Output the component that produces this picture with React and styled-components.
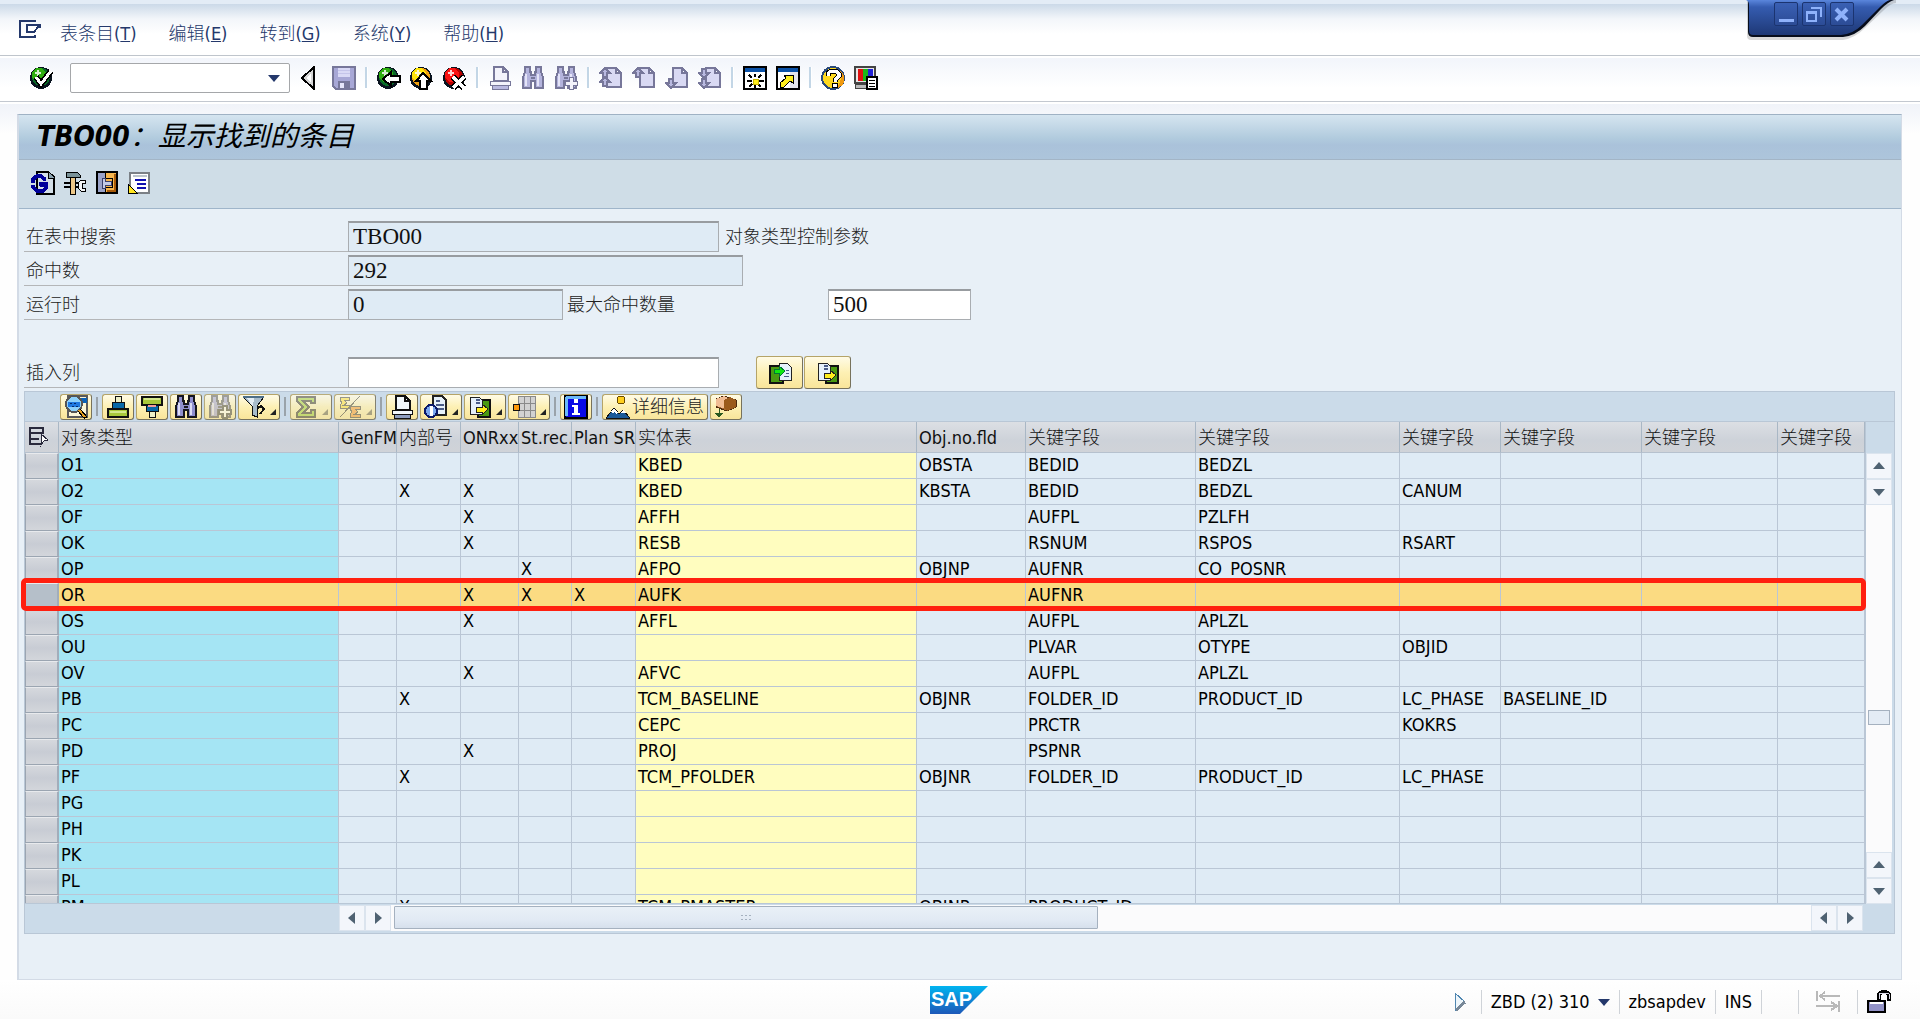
import React from "react";
import styled, { createGlobalStyle, css } from "styled-components";

const GlobalStyle = createGlobalStyle`
  * {
    box-sizing: border-box;
  }

  body {
    margin: 0;
    background: #fff;
    color: #000;
    font-family: "DejaVu Sans Condensed", "DejaVu Sans", "Noto Sans CJK SC", sans-serif;
    font-size: 18px;
    line-height: 25px;
  }

  button,
  input {
    font: inherit;
    color: inherit;
    margin: 0;
    padding: 0;
  }
`;

const Page = styled.div`
  position: relative;
  display: flex;
  flex-direction: column;
  height: 100vh;
  min-height: 700px;
  overflow: hidden;
  background: linear-gradient(#f0f3f9, #fefefe 30px) 0 104px no-repeat #fff;
`;

/* ---------- icons ---------- */

const Svg = styled.svg`
  display: block;
  flex: none;
  opacity: ${(p) => (p.$dim ? 0.5 : 1)};
`;

const Ball = ({ fill, dark }) => (
  <>
    <circle cx="11" cy="12" r="11" fill="#0a1420" />
    <circle cx="11" cy="11" r="9" fill={dark} />
    <circle cx="9" cy="9" r="7" fill={fill} />
    <path d="M7 4h2v2h2v2H9v2H7V8H5V6h2z" fill="#fff" opacity="0.8" />
  </>
);

const PageShape = ({ x = 8, fill = "#d9d9f3", stroke = "#77779a" }) => (
  <path d={`M${x} 2h9l5 5v14H${x}z M${x + 9} 2v5h5`} fill={fill} stroke={stroke} strokeWidth="2" />
);

const UpArrow = ({ x, y }) => (
  <path d={`M${x} ${y}l5 5h-3v4h-4v-4h-3z`} fill="#b9b9e0" stroke="#77779a" strokeWidth="1.5" />
);

const DownArrow = ({ x, y }) => (
  <path d={`M${x} ${y}l5-5h-3v-4h-4v4h-3z`} fill="#b9b9e0" stroke="#77779a" strokeWidth="1.5" />
);

const Binoculars = ({ fill, stroke, light }) => (
  <>
    <path
      d="M4 1h5v5h1v3h4V6h1V1h5v5l2 5v11h-8v-7h-4v7H2V11l2-5z"
      fill={fill}
      stroke={stroke}
      strokeWidth="2"
    />
    <path d="M5 8v12M17 8v12" stroke={light} strokeWidth="2" />
    <path d="M10 12h4" stroke={stroke} strokeWidth="2" />
  </>
);

const Printer = ({ paper, body, stroke }) => (
  <>
    <path d="M6 15V1h9l5 5v9z" fill={paper} stroke={stroke} strokeWidth="2" />
    <path d="M15 1v5h5" fill="none" stroke={stroke} strokeWidth="2" />
    <path d="M2 15h20v4H2z" fill={paper} stroke={stroke} strokeWidth="1" />
    <path d="M4 19h16v4H4z" fill={body} stroke={stroke} strokeWidth="1" />
  </>
);

const icons = {
  menu: (
    <>
      <path d="M17 5V4H2v16h15v-2" fill="none" stroke="#24386b" strokeWidth="2" />
      <path d="M9 8h13v2h-2l-4 5H9z" fill="#fff" stroke="#24386b" strokeWidth="2" />
    </>
  ),
  enter: (
    <>
      <Ball fill="#2fae10" dark="#0a6a28" />
      <path d="M6 11l5 7L21 5" fill="none" stroke="#000" strokeWidth="6" />
      <path d="M6 11l5 7L21 5" fill="none" stroke="#fff" strokeWidth="3" />
    </>
  ),
  collapse: (
    <>
      <path d="M15 1v22L3 12z" fill="#d6d6d6" stroke="#000" strokeWidth="2" />
      <path d="M12 7v9l-5-4z" fill="#fff" />
    </>
  ),
  save: (
    <>
      <path d="M1 1h22v22H4l-3-3z" fill="#a7a7d6" stroke="#77779a" strokeWidth="2" />
      <path d="M6 2h12v9H6z" fill="#d9d9f6" />
      <path d="M6 4h12M6 7h12" stroke="#c4c4ea" />
      <path d="M6 15h12v8H6z" fill="#77779a" />
      <path d="M8 17h4v5H8z" fill="#e6e6fa" />
    </>
  ),
  back: (
    <>
      <Ball fill="#2fae10" dark="#0a6a28" />
      <path d="M6 13l8-7v4h9v6h-9v4z" fill="#fff" stroke="#000" strokeWidth="2" />
    </>
  ),
  exit: (
    <>
      <Ball fill="#ffe60a" dark="#f0a010" />
      <path d="M13 7l8 8h-4v8h-7v-8H6z" fill="#fff" stroke="#000" strokeWidth="2" />
    </>
  ),
  cancel: (
    <>
      <Ball fill="#fa1414" dark="#b80000" />
      <path d="M10 11l11 11M21 11L10 22" stroke="#000" strokeWidth="6" />
      <path d="M10 11l11 11M21 11L10 22" stroke="#fff" strokeWidth="3" />
    </>
  ),
  print: <Printer paper="#f3f3fb" body="#b9b9e0" stroke="#77779a" />,
  find: <Binoculars fill="#b4b4dd" stroke="#77779a" light="#e4e4f8" />,
  findNext: (
    <>
      <Binoculars fill="#b4b4dd" stroke="#77779a" light="#e4e4f8" />
      <path d="M15 11h4v4h4v4h-4v4h-4v-4h-4v-4h4z" fill="#f3f3fb" stroke="#77779a" strokeWidth="1" />
    </>
  ),
  firstPage: (
    <>
      <PageShape />
      <UpArrow x={6} y={2} />
      <UpArrow x={6} y={11} />
    </>
  ),
  prevPage: (
    <>
      <PageShape />
      <UpArrow x={6} y={2} />
    </>
  ),
  nextPage: (
    <>
      <PageShape />
      <DownArrow x={6} y={22} />
    </>
  ),
  lastPage: (
    <>
      <PageShape />
      <DownArrow x={6} y={12} />
      <DownArrow x={6} y={22} />
    </>
  ),
  newSession: (
    <>
      <path d="M1 1h22v22H1z" fill="#fff" stroke="#000" strokeWidth="2" />
      <path d="M2 2h20v4H2z" fill="#0b52a8" />
      <path d="M12 8v3M12 18v4M4 15h5M15 15h6M6 9l3 3M18 9l-3 3M6 21l3-3M18 21l-3-3" stroke="#000" strokeWidth="2" />
      <path d="M10 13h5v5h-5z" fill="#ffee1e" stroke="#c8b400" />
    </>
  ),
  shortcut: (
    <>
      <path d="M1 1h22v22H1z" fill="#e4e4ec" stroke="#000" strokeWidth="2" />
      <path d="M2 2h20v4H2z" fill="#0b52a8" />
      <path d="M2 6h12v16H2z" fill="#fff" />
      <path d="M4 21v-4l6-5-2-3h9v8l-3-2-6 6z" fill="#ffee1e" stroke="#000" strokeWidth="1" />
    </>
  ),
  help: (
    <>
      <circle cx="12" cy="12" r="11" fill="#ffd91e" stroke="#2a4a7a" strokeWidth="2" />
      <path d="M17 4a9 9 0 0 1-6 18c8 0 12-10 6-18z" fill="#f09a10" />
      <path d="M7 10V7l3-2h5l3 3v2l-4 4v2" fill="none" stroke="#000" strokeWidth="5" />
      <path d="M7 10V7l3-2h5l3 3v2l-4 4v2" fill="none" stroke="#fff" strokeWidth="3" />
      <path d="M11 17h5v4h-5z" fill="#fff" stroke="#000" />
    </>
  ),
  layout: (
    <>
      <path d="M1 1h20v16H1z" fill="#e6e6e6" stroke="#444" strokeWidth="2" />
      <path d="M4 3h5v12H4z" fill="#e01010" />
      <path d="M9 3h5v12H9z" fill="#18b818" />
      <path d="M14 3h5v12h-5z" fill="#2020d8" />
      <path d="M1 18h14v4H1z" fill="#bbb" stroke="#444" />
      <path d="M13 11h10v12H13z" fill="#fff" stroke="#000" strokeWidth="2" />
      <path d="M15 14h6M15 17h6M15 20h6" stroke="#000" />
    </>
  ),
  refresh: (
    <>
      <path d="M6 1h11l6 5v17H6z" fill="#d4dfe8" stroke="#000" strokeWidth="2" />
      <path d="M17 1v6h6" fill="#8ba2b0" stroke="#000" />
      <path d="M15 8H13L10 5H6L2 8v4" fill="none" stroke="#00009a" strokeWidth="4" />
      <path d="M2 14v2l4 4h6l3-3v-3H9" fill="none" stroke="#00009a" strokeWidth="4" />
      <path d="M8 11h9v4H8z" fill="#00009a" />
    </>
  ),
  tools: (
    <>
      <path d="M1 12h6M1 16h6M12 12h4M12 16h4" stroke="#000" strokeWidth="2" />
      <path d="M3 1h11l3 3v2H3z" fill="#7a9298" stroke="#000" strokeWidth="1" />
      <path d="M7 6h5v17H7z" fill="#ecc788" stroke="#000" strokeWidth="1" />
      <path d="M22 9h-4l-3 3v5l3 3h4v-3h-3v-5h3z" fill="#f2f4f6" stroke="#000" strokeWidth="1" />
    </>
  ),
  select: (
    <>
      <path d="M2 1h20v21H2z" fill="#f7b64e" stroke="#000" strokeWidth="2" />
      <path d="M3 2h7v19H3z" fill="#9aa2c8" />
      <path d="M10 2v5h7v9h-7v5" fill="none" stroke="#000" strokeWidth="1" />
      <path d="M7 7h3v3h6v4h-6v3H7z" fill="#c4cbe6" stroke="#39406a" strokeWidth="1" />
      <path d="M20 3v17h-8" fill="none" stroke="#a85a08" strokeWidth="2" />
    </>
  ),
  memo: (
    <>
      <path d="M3 2h19v20H3z" fill="#fff" stroke="#7b8086" strokeWidth="2" />
      <path d="M8 9h11M10 13h9M10 17h9" stroke="#1010b0" strokeWidth="2" />
      <path d="M6 5h14" stroke="#bcc4cc" strokeWidth="2" />
      <path d="M1 13l9 9H1z" fill="#ffe420" stroke="#000" />
    </>
  ),
  details: (
    <>
      <path d="M4 1h19v21H4z" fill="#fbf6d8" stroke="#5a5a5a" strokeWidth="2" />
      <path d="M17 3h6v5h-6z" fill="#0b62b8" />
      <circle cx="10" cy="9" r="8" fill="#8cd0fa" stroke="#555" strokeWidth="2" />
      <path d="M4 7h12v5H4z" fill="#1e78e0" />
      <path d="M6 8h2M10 8h2M8 11h2M12 11h2" stroke="#042a6a" />
      <path d="M15 15l7 8" stroke="#000" strokeWidth="4" />
      <path d="M15 15l6 7" stroke="#e8a020" strokeWidth="2" />
    </>
  ),
  sortAsc: (
    <>
      <path d="M9 1h6v6H9z" fill="#eef0c8" stroke="#111" strokeWidth="1" />
      <path d="M6 7h12v6H6z" fill="#0868a8" stroke="#111" strokeWidth="1" />
      <path d="M2 14h20v8H2z" fill="#a9c83c" stroke="#111" strokeWidth="2" />
      <path d="M4 16h16v2H4z" fill="#d3e78c" />
    </>
  ),
  sortDesc: (
    <>
      <path d="M2 2h20v8H2z" fill="#a9c83c" stroke="#111" strokeWidth="2" />
      <path d="M4 3h16v2H4z" fill="#d3e78c" />
      <path d="M6 10h12v6H6z" fill="#0868a8" stroke="#111" strokeWidth="1" />
      <path d="M8 10h8v2H8z" fill="#f59a9a" />
      <path d="M9 16h6v6H9z" fill="#eef0c8" stroke="#111" strokeWidth="1" />
    </>
  ),
  gridFind: <Binoculars fill="#8f8fce" stroke="#16161e" light="#dcdcf4" />,
  gridFindNext: (
    <>
      <Binoculars fill="#8f8fce" stroke="#33333c" light="#dcdcf4" />
      <path d="M15 11h4v4h4v4h-4v4h-4v-4h-4v-4h4z" fill="#fff" stroke="#222" strokeWidth="2" />
    </>
  ),
  filter: (
    <>
      <path d="M1 2h21l-7 9v11l-5-2v-9z" fill="#a8bccb" stroke="#111" strokeWidth="1" />
      <path d="M5 3h7l-1 8h-1z" fill="#e4edf3" />
      <path d="M1 2h21" stroke="#4e6f88" strokeWidth="2" />
      <path d="M16 13l3-2 3 3-4 5" fill="none" stroke="#111" strokeWidth="2" />
    </>
  ),
  sum: (
    <path
      d="M3 2h18v6h-4V6H9l6 6-6 6h8v-3h4v7H3v-4l6-6-6-6z"
      fill="#8fc81e"
      stroke="#111"
      strokeWidth="2"
    />
  ),
  subtotal: (
    <>
      <path d="M2 2h9v3H6l3 3-3 2h5v3H2v-3l2-2-2-3z" fill="#ffe020" stroke="#222" />
      <path d="M12 11h10v3h-5l3 3-3 2h5v3H12v-3l2-2-2-3z" fill="#f58a1e" stroke="#222" />
      <path d="M22 1L2 22" stroke="#222" strokeWidth="1" />
    </>
  ),
  gridPrint: <Printer paper="#f2f8fb" body="#8f9fc0" stroke="#111" />,
  views: (
    <>
      <path d="M9 1h9l4 4v15H9z" fill="#e6f1fb" stroke="#222" strokeWidth="2" />
      <path d="M12 6h4M12 10h8M14 14h6" stroke="#4a5c88" strokeWidth="2" />
      <circle cx="7" cy="16" r="6" fill="#7aa8f0" stroke="#0a1a6a" strokeWidth="2" />
      <path d="M7 11v10" stroke="#fff" strokeWidth="3" />
    </>
  ),
  exportFile: (
    <>
      <path d="M10 5h12v17H10z" fill="#4a9a12" stroke="#111" strokeWidth="2" />
      <path d="M2 2h9l3 3v14H2z" fill="#e6f1fb" stroke="#222" strokeWidth="1" />
      <path d="M8 5h4M8 8h4" stroke="#4a5c88" strokeWidth="2" />
      <path d="M8 12h6V9l6 5-6 6v-3H8z" fill="#ffee1e" stroke="#222" />
    </>
  ),
  importFile: (
    <>
      <path d="M2 5h13v17H2z" fill="#4a9a12" stroke="#111" strokeWidth="2" />
      <path d="M11 2h8l4 4v13H11z" fill="#e6f1fb" stroke="#222" strokeWidth="1" />
      <path d="M18 9h3M18 12h3M16 15h5" stroke="#4a5c88" />
      <path d="M6 8h5V5l6 5-6 6v-4H6z" fill="#10e810" stroke="#073" />
    </>
  ),
  gridLayout: (
    <>
      <path d="M6 1h17v21H6z" fill="#d2d2d2" />
      <path d="M6 1h17v21H6zM12 1v21M18 1v21M6 8h17M6 15h17" fill="none" stroke="#8a8a8a" strokeWidth="1" />
      <path d="M1 9h6v6H1z" fill="#ff9a0a" stroke="#111" strokeWidth="1" />
    </>
  ),
  info: (
    <>
      <path d="M1 1h22v22H1z" fill="#0a0ae6" stroke="#000" strokeWidth="2" />
      <path d="M2 2h20M2 2v19" stroke="#6ab8fa" strokeWidth="3" />
      <path d="M10 4h4v4h-4zM8 10h6v8h2v2H8v-2h2v-6H8z" fill="#fff" />
    </>
  ),
  mountain: (
    <>
      <circle cx="15" cy="5" r="4" fill="#ffcf1e" stroke="#6a4a00" strokeWidth="1" />
      <path d="M0 23l8-10 5 6 4-4 7 8z" fill="#1a5a9a" stroke="#111" />
      <path d="M5 17l3-4 4 5-2 1-2-2-1 2z" fill="#fff" />
      <path d="M15 18l2-3 3 3z" fill="#fff" />
    </>
  ),
  box: (
    <>
      <path d="M2 4l8-3 12 4v7l-9 4-11-4z" fill="#a5652a" stroke="#4a2a10" />
      <path d="M2 4l8-3 4 2v6l-5 4-7-2z" fill="#f1bd94" />
      <path d="M10 5l6-3 6 3v7l-9 4-3-4z" fill="#9a5a1c" />
      <path d="M5 14v6M1 18l4 4 4-4z" fill="#2a5a20" stroke="#2a5a20" strokeWidth="1" />
    </>
  ),
  columns: (
    <>
      <path d="M3 3h13v5H3zM3 8v11h11M3 14h9" fill="none" stroke="#2a2a3c" strokeWidth="2" />
      <path d="M14 9l7 6-4 1-3 4z" fill="#fff" stroke="#2a2a3c" strokeWidth="1" />
    </>
  ),
  play: (
    <>
      <path d="M7 3v18l10-9z" fill="#eef6fb" stroke="#4f86b0" strokeWidth="1" />
      <path d="M8 20l9-8" stroke="#788898" strokeWidth="3" />
    </>
  ),
  transfer: (
    <path
      d="M1 1v10M3 6h21M9 2L4 6l5 4M0 16h21M15 12l6 4-6 4M23 11v11"
      fill="none"
      stroke="#b9b9b9"
      strokeWidth="2"
    />
  ),
  lock: (
    <>
      <path d="M1 11h17v11H1z" fill="#9292c6" stroke="#000" strokeWidth="2" />
      <path d="M3 13h13" stroke="#fff" strokeWidth="2" />
      <path d="M12 10V4l3-2h4l3 2v7" fill="none" stroke="#000" strokeWidth="4" />
      <path d="M12 9V4l3-1h4l3 1v5" fill="none" stroke="#d8d8e6" strokeWidth="1" />
    </>
  ),
};

const Icon = ({ name, size = 24, dim }) => (
  <Svg width={size} height={size} viewBox="0 0 24 24" shapeRendering="crispEdges" $dim={dim} aria-hidden="true">
    {icons[name]}
  </Svg>
);

const shapes = {
  up: "M0 9l6-7 6 7z",
  down: "M0 3l6 7 6-7z",
  left: "M9 0L2 6l7 6z",
  right: "M3 0l7 6-7 6z",
};

const Arrow = ({ dir, color = "#4f6272" }) => (
  <Svg width="12" height="12" viewBox="0 0 12 12" aria-hidden="true">
    <path d={shapes[dir]} fill={color} />
  </Svg>
);

/* ---------- menu and system toolbar ---------- */

const MenuBar = styled.nav`
  display: flex;
  align-items: center;
  flex: none;
  height: 56px;
  padding: 8px 18px 0;
  border-top: 4px solid #e3ecf6;
  border-bottom: 1px solid #bfc5cc;
  background: linear-gradient(#cbd9e8, #f3f6fa 15px, #fff 30px);
`;

const MenuButton = styled.button`
  margin-right: 32px;
  border: 0;
  background: none;
  color: #24386b;
  font-weight: 300;
  white-space: nowrap;

  &:first-child {
    margin-right: 18px;
    margin-bottom: 10px;
  }
`;

const SystemBar = styled.div`
  display: flex;
  align-items: center;
  flex: none;
  gap: 9px;
  height: 44px;
  margin-top: 2px;
  padding: 0 30px 4px;
  border-bottom: 1px solid #c3c8d0;
  background: linear-gradient(#f2f5fb, #fff 30px);
`;

const IconButton = styled.button`
  display: flex;
  border: 0;
  background: none;
`;

const BarLine = styled.span`
  width: 3px;
  height: 21px;
  border-right: 1px solid #fff;
  background: #c3d6e6;
`;

const CommandBox = styled.div`
  display: flex;
  align-items: center;
  width: 220px;
  height: 30px;
  margin-left: 7px;
  padding-right: 9px;
  border: 1px solid #a5a7aa;
  border-radius: 2px;
  background: #fff;

  input {
    flex: 1;
    min-width: 0;
    border: 0;
    outline: 0;
    background: none;
  }
`;

const WindowTab = styled.div`
  position: absolute;
  top: 0;
  right: 24px;
  width: 150px;
  height: 44px;

  > svg {
    position: absolute;
    inset: 0;
  }
`;

const WindowButtons = styled.div`
  position: relative;
  display: flex;
  gap: 4px;
  padding: 2px 0 0 28px;

  button {
    width: 24px;
    height: 24px;
    border: 1px solid #1b3470;
    border-radius: 2px;
    background: linear-gradient(#3a60b4, #2c4c96);
  }
`;

/* ---------- work area ---------- */

const Panel = styled.main`
  display: flex;
  flex-direction: column;
  flex: 1;
  min-height: 0;
  margin: 12px 18px 0 17px;
  border: 1px solid #d3dbe6;
  border-left-width: 2px;
  border-top-color: #9fb2c4;
  background: #e8f0f7;
`;

const Title = styled.h1`
  flex: none;
  height: 45px;
  margin: 0;
  padding-left: 18px;
  border-bottom: 1px solid #a3b5c6;
  background: linear-gradient(#d5e5f0, #b0cadd 24px, #aac2da 30px, #adc5db);
  font-size: 28px;
  font-style: italic;
  font-weight: bold;
  line-height: 44px;

  span {
    font-weight: 400;
  }
`;

const AppBar = styled.div`
  display: flex;
  align-items: center;
  flex: none;
  gap: 8px;
  height: 49px;
  padding: 0 0 2px 12px;
  border-bottom: 1px solid #9fb5ca;
  background: #cfdde7;
`;

const Body = styled.div`
  display: flex;
  flex-direction: column;
  flex: 1;
  min-height: 0;
  padding: 12px 6px 45px 5px;
`;

const FieldRow = styled.div`
  display: flex;
  align-items: center;
  flex: none;
  height: 31px;
  margin-bottom: 3px;
  margin-top: ${(p) => (p.$spaced ? "34px" : "0")};
  color: #222;
  font-weight: 300;
  white-space: nowrap;
`;

const FieldLabel = styled.label`
  width: 324px;
  height: 31px;
  padding-left: 2px;
  border-bottom: 1px solid #b4b6b8;
  line-height: 32px;
`;

const SideLabel = styled.label`
  width: 265px;
  padding-left: 4px;
`;

const Note = styled.span`
  padding-left: 6px;
`;

const Field = styled.input`
  width: ${(p) => p.$width}px;
  height: 31px;
  padding-left: 4px;
  border: 1px solid #a9adb1;
  border-top: 2px solid #989ca0;
  background: ${(p) => (p.readOnly ? "#dfebf5" : "#fff")};
  color: #111;
  font-family: "Liberation Serif", serif;
  font-size: 23px;
`;

const goldButton = css`
  display: flex;
  align-items: center;
  justify-content: center;
  border: 1px solid #77725c;
  border-top-color: #b5a468;
  border-left-color: #b5a468;
  border-radius: 3px;
  background: linear-gradient(#fffbe6, #fdf0b4 50%, #f9e59a);
`;

const ColumnButton = styled.button`
  ${goldButton}
  width: 47px;
  height: 33px;
  margin-right: 1px;

  &:first-of-type {
    margin-left: 37px;
  }
`;

/* ---------- result grid ---------- */

const Grid = styled.section`
  display: flex;
  flex-direction: column;
  flex: 1;
  min-height: 0;
  border: 1px solid #b9c7d6;
  background: #cbdbe9;
`;

const GridBar = styled.div`
  display: flex;
  align-items: center;
  flex: none;
  gap: 2px;
  height: 30px;
  padding-left: 35px;
  border-bottom: 1px solid #b9c7d6;
`;

const GridButton = styled.button`
  ${goldButton}
  position: relative;
  height: 26px;
  padding: 0 3px;
  padding-right: ${(p) => (p.$menu ? "13px" : "3px")};
  opacity: ${(p) => (p.disabled ? 0.85 : 1)};
  gap: 2px;
  color: #222;
  font-weight: 300;
  white-space: nowrap;
  line-height: 24px;

  &::after {
    content: "";
    display: ${(p) => (p.$menu ? "block" : "none")};
    position: absolute;
    right: 3px;
    bottom: 4px;
    border: 3px solid #222;
    border-top-color: transparent;
    border-left-color: transparent;
    opacity: ${(p) => (p.disabled ? 0.4 : 1)};
  }
`;

const GridLine = styled.span`
  width: 2px;
  height: 19px;
  margin: 0 2px;
  background: #9aa3aa;
`;

const GridMain = styled.div`
  display: flex;
  flex: 1;
  min-height: 0;
`;

const TableArea = styled.div`
  position: relative;
  display: flex;
  flex: 1;
  min-width: 0;
`;

const Viewport = styled.div`
  flex: 1;
  min-width: 0;
  overflow: hidden;
  border-right: 1px solid #b9c7d6;
  border-bottom: 1px solid #b9c7d6;
`;

const Table = styled.table`
  width: 100%;
  table-layout: fixed;
  border-collapse: separate;
  border-spacing: 0;
`;

const HeadCell = styled.th`
  height: 31px;
  padding: 0 0 0 2px;
  border-right: 1px solid #a9b7c5;
  border-bottom: 1px solid #b6c1ce;
  background: linear-gradient(#dcdfe4, #cdd2d9 60%, #d0d3d8);
  color: #111;
  font-weight: 300;
  text-align: left;
  white-space: nowrap;
`;

const cellColors = { key: "#a5e5f4", entity: "#fffdbf" };

const Cell = styled.td`
  padding: 0 0 1px 2px;
  overflow: hidden;
  border-right: 1px solid #bac6d5;
  border-bottom: 1px solid #bac6d5;
  background: ${(p) => (p.$selected ? "#fbdb82" : cellColors[p.$kind] || "#dfebf5")};
  line-height: 24px;
  white-space: nowrap;
`;

const RowHandle = styled.td`
  padding: 0;
  border: 1px solid #9ba5b1;
  border-top: 1px solid #e8eaed;
  border-right: 2px solid #a2adba;
  background: ${(p) => (p.$selected ? "#b5bfc9" : "linear-gradient(#d5d8dd, #c8ccd4 50%, #d3d6db)")};
`;

const Highlight = styled.div`
  position: absolute;
  left: -4px;
  right: 0;
  height: 33px;
  border: 5px solid #ff1f0f;
  border-radius: 5px;
  pointer-events: none;
`;

const VScroll = styled.div`
  display: flex;
  flex-direction: column;
  width: 28px;
  padding: 31px 2px 0 0;
`;

const HScroll = styled.div`
  display: flex;
  flex: none;
  height: 29px;
  padding: 1px 31px 2px 314px;
`;

const ScrollButton = styled.button`
  display: flex;
  align-items: center;
  justify-content: center;
  flex: none;
  width: 26px;
  height: 26px;
  border: 1px solid #dbe4ee;
  background: #f3f6fb;
`;

const Track = styled.div`
  flex: 1;
  min-width: 0;
  min-height: 0;
  background: #fbfbfc;
`;

const VThumb = styled.div`
  height: 15px;
  margin: 0 2px;
  border: 1px solid #a5b1bf;
  background: #e4ecf5;
`;

const HThumb = styled.div`
  display: flex;
  align-items: center;
  justify-content: center;
  gap: 2px;
  width: calc(50% - 6px);
  height: 23px;
  margin: 1px 0 0 3px;
  border: 1px solid #a5b1bf;
  border-radius: 1px;
  background: linear-gradient(#e9f0f7, #e2eaf4 60%, #d6e0ec);

  i {
    width: 2px;
    height: 5px;
    border-top: 1px solid #a5b1bf;
    border-bottom: 1px solid #a5b1bf;
  }
`;

/* ---------- status bar ---------- */

const StatusBar = styled.footer`
  display: flex;
  align-items: center;
  flex: none;
  height: 39px;
  padding-right: 29px;
  padding-left: calc(50% - 30px);
  background: linear-gradient(#fff, #fafafa);
`;

const StatusItems = styled.div`
  display: flex;
  align-items: center;
  gap: 9px;
  margin-left: auto;
  padding-top: 4px;
  white-space: nowrap;

  span {
    display: flex;
    align-items: center;
    gap: 8px;
  }
`;

const StatusLine = styled.i`
  width: 1px;
  height: 24px;
  background: #cfd3d8;
`;

const StatusGap = styled.i`
  width: 18px;
`;

const Transfer = styled.div`
  padding: 0 8px;
`;

const menus = [
  ["表条目", "T"],
  ["编辑", "E"],
  ["转到", "G"],
  ["系统", "Y"],
  ["帮助", "H"],
];

const systemIcons = [
  "save", "|", "back", "exit", "cancel", "|", "print", "find", "findNext", "|",
  "firstPage", "prevPage", "nextPage", "lastPage", "|", "newSession", "shortcut", "|", "help", "layout",
];

const gridTools = [
  { icon: "details" }, "|",
  { icon: "sortAsc" }, { icon: "sortDesc" }, { icon: "gridFind" },
  { icon: "gridFindNext", disabled: true }, { icon: "filter", menu: true }, "|",
  { icon: "sum", menu: true, disabled: true }, { icon: "subtotal", menu: true, disabled: true }, "|",
  { icon: "gridPrint" }, { icon: "views", menu: true }, { icon: "exportFile", menu: true },
  { icon: "gridLayout", menu: true }, "|",
  { icon: "info" }, "|",
  { icon: "mountain", text: "详细信息" }, { icon: "box" },
];

const columns = [
  ["对象类型", 280], ["GenFM", 58], ["内部号", 64], ["ONRxx", 58], ["St.rec.", 53],
  ["Plan SR", 64], ["实体表", 281], ["Obj.no.fld", 109], ["关键字段", 170], ["关键字段", 204],
  ["关键字段", 101], ["关键字段", 141], ["关键字段", 136], ["关键字段"],
];

const rows = [
  ["O1", "", "", "", "", "", "KBED", "OBSTA", "BEDID", "BEDZL"],
  ["O2", "", "X", "X", "", "", "KBED", "KBSTA", "BEDID", "BEDZL", "CANUM"],
  ["OF", "", "", "X", "", "", "AFFH", "", "AUFPL", "PZLFH"],
  ["OK", "", "", "X", "", "", "RESB", "", "RSNUM", "RSPOS", "RSART"],
  ["OP", "", "", "", "X", "", "AFPO", "OBJNP", "AUFNR", "CO_POSNR"],
  ["OR", "", "", "X", "X", "X", "AUFK", "", "AUFNR"],
  ["OS", "", "", "X", "", "", "AFFL", "", "AUFPL", "APLZL"],
  ["OU", "", "", "", "", "", "", "", "PLVAR", "OTYPE", "OBJID"],
  ["OV", "", "", "X", "", "", "AFVC", "", "AUFPL", "APLZL"],
  ["PB", "", "X", "", "", "", "TCM_BASELINE", "OBJNR", "FOLDER_ID", "PRODUCT_ID", "LC_PHASE", "BASELINE_ID"],
  ["PC", "", "", "", "", "", "CEPC", "", "PRCTR", "", "KOKRS"],
  ["PD", "", "", "X", "", "", "PROJ", "", "PSPNR"],
  ["PF", "", "X", "", "", "", "TCM_PFOLDER", "OBJNR", "FOLDER_ID", "PRODUCT_ID", "LC_PHASE"],
  ["PG"],
  ["PH"],
  ["PK"],
  ["PL"],
  ["PM", "", "X", "", "", "", "TCM_PMASTER", "OBJNR", "PRODUCT_ID"],
];

const selectedRow = 5;

function WindowControls() {
  return (
    <WindowTab>
      <svg width="150" height="44" viewBox="0 0 150 44" aria-hidden="true">
        <defs>
          <linearGradient id="tab" x1="0" y1="0" x2="0" y2="1">
            <stop offset="0" stopColor="#5a86dc" />
            <stop offset="0.2" stopColor="#355cb0" />
            <stop offset="1" stopColor="#1e3876" />
          </linearGradient>
        </defs>
        <path d="M1 0v36q0 4 4 4h92q12-2 22-12l19-18q7-7 12-7V0z" fill="#000" opacity="0.15" />
        <path d="M2 0v32q0 5 5 5h90q12-1 22-11l16-17q7-7 13-9z" fill="#070d1c" />
        <path d="M0 0q3 1 3 5v26q0 4 4 4h88q12-1 21-10l18-18q6-6 10-7z" fill="url(#tab)" />
      </svg>
      <WindowButtons>
        <button aria-label="Minimize">
          <Svg width="22" height="22" viewBox="0 0 22 22">
            <path d="M4 16h15v3H4z" fill="#8fb2fb" />
          </Svg>
        </button>
        <button aria-label="Restore">
          <Svg width="22" height="22" viewBox="0 0 22 22" fill="none" stroke="#8fb2fb">
            <path d="M4 10h9v8H4z" strokeWidth="2" />
            <path d="M8 5h10v9M3 9h11" strokeWidth="2" />
          </Svg>
        </button>
        <button aria-label="Close">
          <Svg width="22" height="22" viewBox="0 0 22 22">
            <path d="M5 6l11 11M16 6L5 17" stroke="#8fb2fb" strokeWidth="4" />
          </Svg>
        </button>
      </WindowButtons>
    </WindowTab>
  );
}

function ResultTable() {
  return (
    <Table>
      <colgroup>
        <col style={{ width: 34 }} />
        {columns.map(([, width], i) => (
          <col key={i} style={{ width }} />
        ))}
      </colgroup>
      <thead>
        <tr>
          <HeadCell>
            <Icon name="columns" />
          </HeadCell>
          {columns.map(([name], i) => (
            <HeadCell key={i}>{name}</HeadCell>
          ))}
        </tr>
      </thead>
      <tbody>
        {rows.map((row, r) => (
          <tr key={row[0]}>
            <RowHandle $selected={r === selectedRow} />
            {columns.map((_, c) => (
              <Cell key={c} $kind={c === 0 ? "key" : c === 6 ? "entity" : ""} $selected={r === selectedRow}>
                {row[c] || "\u00a0"}
              </Cell>
            ))}
          </tr>
        ))}
      </tbody>
    </Table>
  );
}

export default function App() {
  return (
    <Page>
      <GlobalStyle />
      <MenuBar>
        <MenuButton aria-label="Menu">
          <Icon name="menu" />
        </MenuButton>
        {menus.map(([name, key]) => (
          <MenuButton key={key}>
            {name}(<u>{key}</u>)
          </MenuButton>
        ))}
      </MenuBar>
      <WindowControls />

      <SystemBar>
        <IconButton aria-label="Enter">
          <Icon name="enter" />
        </IconButton>
        <CommandBox>
          <input aria-label="Command" />
          <IconButton aria-label="History">
            <Arrow dir="down" color="#24386b" />
          </IconButton>
        </CommandBox>
        <IconButton aria-label="Collapse">
          <Icon name="collapse" />
        </IconButton>
        {systemIcons.map((name, i) =>
          name === "|" ? (
            <BarLine key={i} />
          ) : (
            <IconButton key={i} aria-label={name}>
              <Icon name={name} />
            </IconButton>
          )
        )}
      </SystemBar>

      <Panel>
        <Title>
          TBO00<span>：显示找到的条目</span>
        </Title>
        <AppBar>
          {["refresh", "tools", "select", "memo"].map((name) => (
            <IconButton key={name} aria-label={name}>
              <Icon name={name} />
            </IconButton>
          ))}
        </AppBar>
        <Body>
          <FieldRow>
            <FieldLabel htmlFor="table">在表中搜索</FieldLabel>
            <Field id="table" $width={371} defaultValue="TBO00" readOnly />
            <Note>对象类型控制参数</Note>
          </FieldRow>
          <FieldRow>
            <FieldLabel htmlFor="hits">命中数</FieldLabel>
            <Field id="hits" $width={395} defaultValue="292" readOnly />
          </FieldRow>
          <FieldRow>
            <FieldLabel htmlFor="runtime">运行时</FieldLabel>
            <Field id="runtime" $width={215} defaultValue="0" readOnly />
            <SideLabel htmlFor="max">最大命中数量</SideLabel>
            <Field id="max" $width={143} defaultValue="500" />
          </FieldRow>
          <FieldRow $spaced>
            <FieldLabel htmlFor="column">插入列</FieldLabel>
            <Field id="column" $width={371} />
            <ColumnButton aria-label="Insert column">
              <Icon name="importFile" />
            </ColumnButton>
            <ColumnButton aria-label="Remove column">
              <Icon name="exportFile" />
            </ColumnButton>
          </FieldRow>

          <Grid>
            <GridBar>
              {gridTools.map((tool, i) =>
                tool === "|" ? (
                  <GridLine key={i} />
                ) : (
                  <GridButton key={i} aria-label={tool.text || tool.icon} $menu={tool.menu} disabled={tool.disabled}>
                    <Icon name={tool.icon} dim={tool.disabled} />
                    {tool.text}
                  </GridButton>
                )
              )}
            </GridBar>
            <GridMain>
              <TableArea>
                <Viewport>
                  <ResultTable />
                </Viewport>
                <Highlight style={{ top: 26 + selectedRow * 26 }} />
              </TableArea>
              <VScroll>
                <ScrollButton aria-label="Up"><Arrow dir="up" /></ScrollButton>
                <ScrollButton aria-label="Down"><Arrow dir="down" /></ScrollButton>
                <Track>
                  <div style={{ height: "59%" }} />
                  <VThumb />
                </Track>
                <ScrollButton aria-label="Page up"><Arrow dir="up" /></ScrollButton>
                <ScrollButton aria-label="Page down"><Arrow dir="down" /></ScrollButton>
              </VScroll>
            </GridMain>
            <HScroll>
              <ScrollButton aria-label="Left"><Arrow dir="left" /></ScrollButton>
              <ScrollButton aria-label="Right"><Arrow dir="right" /></ScrollButton>
              <Track>
                <HThumb>
                  <i />
                  <i />
                  <i />
                </HThumb>
              </Track>
              <ScrollButton aria-label="Page left"><Arrow dir="left" /></ScrollButton>
              <ScrollButton aria-label="Page right"><Arrow dir="right" /></ScrollButton>
            </HScroll>
          </Grid>
        </Body>
      </Panel>

      <StatusBar>
        <Svg width="58" height="28" viewBox="0 0 58 28" role="img" aria-label="SAP">
          <defs>
            <linearGradient id="sap" x1="0" y1="0" x2="0" y2="1">
              <stop offset="0" stopColor="#00b4f0" />
              <stop offset="1" stopColor="#1d58b8" />
            </linearGradient>
          </defs>
          <path d="M0 0h58L30 28H0z" fill="url(#sap)" />
          <text x="1" y="20" fill="#fff" fontFamily="Liberation Sans, sans-serif" fontSize="20" fontWeight="bold">
            SAP
          </text>
        </Svg>
        <StatusItems>
          <Icon name="play" />
          <StatusLine />
          <span>
            ZBD (2) 310
            <Arrow dir="down" color="#24386b" />
          </span>
          <StatusLine />
          <span>zbsapdev</span>
          <StatusLine />
          <span>INS</span>
          <StatusLine />
          <StatusGap />
          <StatusLine />
          <Transfer>
            <Icon name="transfer" />
          </Transfer>
          <StatusLine />
          <Icon name="lock" />
        </StatusItems>
      </StatusBar>
    </Page>
  );
}
